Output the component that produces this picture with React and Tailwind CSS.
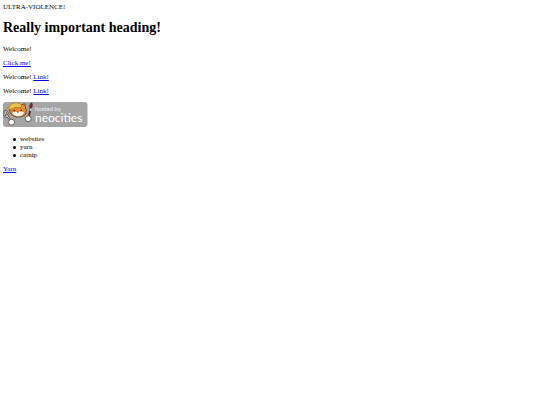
function HostedBadge() {
  return (
    <svg className="h-[25px] w-[85px]" viewBox="0 0 85 25" role="img" aria-label="hosted by neocities">
      <rect width="84.5" height="25" rx="3" fill="#a5a5a5" />

      {/* fork */}
      <path d="M.9 9.6l.5 4c.4 1.4 2 1.4 3.2.4l.8-1.4-2-3.4M2.2 9.4l1.2 3.8 4.6 5.6" fill="none" stroke="#4b4744" strokeWidth="2" strokeLinecap="round" />
      <path d="M.9 9.6l.5 4c.4 1.4 2 1.4 3.2.4l.8-1.4-2-3.4M2.2 9.4l1.2 3.8 4.6 5.6" fill="none" stroke="#ddd" strokeWidth=".9" strokeLinecap="round" />

      {/* brush */}
      <path d="M27.5 6.5l-1.8 8.5" stroke="#5a2023" strokeWidth="1.8" strokeLinecap="round" />
      <path d="M28 6l-.7 2.8" stroke="#ddd" strokeWidth="1.6" />
      <path d="M28.6.8c1.1 1.8.9 4.2-.6 5.6-2-.6-1.7-3.4.6-5.6z" fill="#9a1f22" stroke="#4a1c20" strokeWidth=".7" />

      {/* head */}
      <path d="M6.6 5.8l2.4-2.6 6-1.4 3.4 1.2 3.2-1.4.8 3.4 1 3.6-.8 3.8-3.4 2.2-5.4.4-4.4-1.4-2.4-3.2z" fill="#e88a35" stroke="#6e4018" strokeWidth=".9" strokeLinejoin="round" />
      <path d="M4.8 6.6l1.8-2.8 2.2-2 4-1.2 4.4.8 1.6 2.6-.8 1.4-5.4.2-3.4 1.2-3.4.8z" fill="#ebc04d" stroke="#8e6b23" strokeWidth=".6" strokeLinejoin="round" />
      <path d="M9.2 10.6c1.6-1 3.6-1 5.2-.2 1.8-1.2 4.8-1.2 6.6.2-.4 2.4-2.8 3.6-5.8 3.6-3.2 0-5.4-1.2-6-3.6z" fill="#fff7ec" />
      <circle cx="11.2" cy="8.6" r=".8" fill="#2a1c14" />
      <circle cx="18.2" cy="8.2" r=".8" fill="#2a1c14" />
      <path d="M14 9.8h2.2l-1.1 1.3z" fill="#713321" />

      {/* paws */}
      <circle cx="8.6" cy="20.2" r="3" fill="#fff" stroke="#6d5c4c" strokeWidth="1" />
      <circle cx="25.2" cy="16.8" r="3" fill="#fff" stroke="#6d5c4c" strokeWidth="1" />

      <text x="32" y="9" fill="#eeeeee" className="font-[Lato,sans-serif] text-[6px]">hosted by</text>
      <text x="32" y="20" fill="#fff" className="font-[Lato,sans-serif] text-[12px]">neocities</text>
    </svg>
  )
}

const linkClass = 'text-[#0000ee] underline'

const ITEMS = ['websites', 'yarn', 'catnip']

export default function App() {
  return (
    <main className="min-h-screen bg-white p-[3px] font-['Liberation_Serif',serif] text-[7px] leading-[8px] text-black">
      ULTRA-VIOLENCE!
      <h1 className="my-[9px] text-[14px] leading-[16px] font-bold">Really important heading!</h1>
      <div className="flex flex-col items-start gap-[6px]">
        <p>Welcome!</p>
        <a href="#click" className={linkClass}>Click me!</a>
        <p>Welcome! <a href="#link" className={linkClass}>Link!</a></p>
        <p>Welcome! <a href="#link" className={linkClass}>Link!</a></p>
      </div>
      <a href="#neocities" className="mt-[7px] mb-[8px] block w-fit">
        <HostedBadge />
      </a>
      <ul className="mb-[6px] pl-[10px]">
        {ITEMS.map((item) => (
          <li key={item} className="flex items-center gap-[4px] before:size-[3px] before:rounded-full before:bg-black">
            {item}
          </li>
        ))}
      </ul>
      <a href="#yarn" className={linkClass}>Yarn</a>
    </main>
  )
}
